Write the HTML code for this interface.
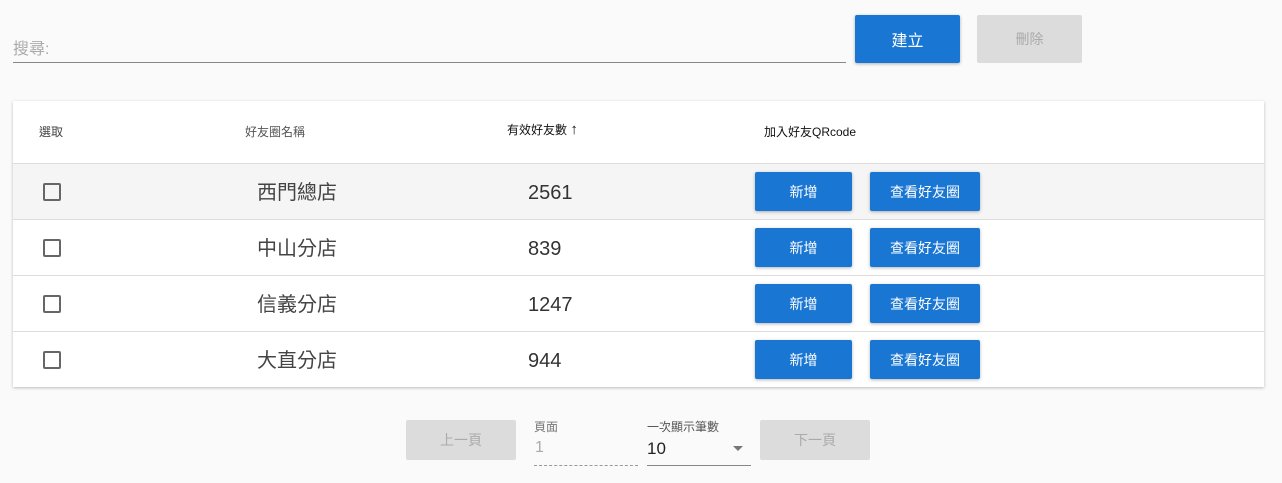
<!DOCTYPE html>
<html><head><meta charset="utf-8"><style>
*{box-sizing:border-box;margin:0;padding:0}
body{width:1282px;height:483px;background:#fafafa;font-family:"Liberation Sans","Noto Sans CJK TC",sans-serif;position:relative;overflow:hidden;color:#333}
.abs{position:absolute}
.btn{position:absolute;border-radius:2px;color:#fff;background:#1976d2;font-size:14px;display:flex;align-items:center;justify-content:center;box-shadow:0 1px 3px rgba(0,0,0,.3)}
.dis{background:#dcdcdc;color:#aaa;box-shadow:none}
.card{position:absolute;left:13px;top:101px;width:1251px;height:286px;background:#fff;box-shadow:0 1px 3px rgba(0,0,0,.25)}
.row{position:absolute;left:0;width:1251px;height:56px;border-top:1px solid #ddd}
.cb{position:absolute;left:30px;top:19px;width:18px;height:18px;border:2px solid #666;border-radius:2px}
.name{position:absolute;left:244px;top:12px;font-size:20px;color:#444}
.num{position:absolute;left:515px;top:18px;font-size:20px;color:#333}
</style></head><body>
<div class="abs" style="left:13px;top:35px;font-size:16px;color:#aaa">搜尋:</div>
<div class="abs" style="left:13px;top:62px;width:833px;height:1px;background:#888"></div>
<div class="btn" style="left:855px;top:15px;width:105px;height:48px;font-size:16px">建立</div>
<div class="btn dis" style="left:977px;top:15px;width:105px;height:48px">刪除</div>
<div class="card">
<div class="abs" style="left:26px;top:22px;font-size:12px;color:#444">選取</div>
<div class="abs" style="left:232px;top:22px;font-size:12px;color:#555">好友圈名稱</div>
<div class="abs" style="left:494px;top:20px;font-size:12px;color:#111">有效好友數 <span style="font-size:15px">↑</span></div>
<div class="abs" style="left:751px;top:22px;font-size:12px;color:#111">加入好友QRcode</div>
<div class="row" style="top:62px;background:#f5f5f5"><div class="cb"></div><div class="name">西門總店</div><div class="num">2561</div></div>
<div class="row" style="top:118px"><div class="cb"></div><div class="name">中山分店</div><div class="num">839</div></div>
<div class="row" style="top:174px"><div class="cb"></div><div class="name">信義分店</div><div class="num">1247</div></div>
<div class="row" style="top:230px"><div class="cb"></div><div class="name">大直分店</div><div class="num">944</div></div>
</div>
<div class="btn" style="left:755px;top:172px;width:97px;height:39px">新增</div><div class="btn" style="left:870px;top:172px;width:110px;height:39px">查看好友圈</div>
<div class="btn" style="left:755px;top:228px;width:97px;height:39px">新增</div><div class="btn" style="left:870px;top:228px;width:110px;height:39px">查看好友圈</div>
<div class="btn" style="left:755px;top:284px;width:97px;height:39px">新增</div><div class="btn" style="left:870px;top:284px;width:110px;height:39px">查看好友圈</div>
<div class="btn" style="left:755px;top:340px;width:97px;height:39px">新增</div><div class="btn" style="left:870px;top:340px;width:110px;height:39px">查看好友圈</div>
<div class="btn dis" style="left:406px;top:420px;width:110px;height:40px">上一頁</div>
<div class="abs" style="left:534px;top:418px;font-size:12px;color:#777">頁面</div>
<div class="abs" style="left:535px;top:439px;font-size:16px;color:#aaa">1</div>
<div class="abs" style="left:534px;top:465px;width:104px;border-top:1px dashed #999"></div>
<div class="abs" style="left:647px;top:418px;font-size:12px;color:#555">一次顯示筆數</div>
<div class="abs" style="left:647px;top:439px;font-size:17px;color:#222">10</div>
<div class="abs" style="left:733px;top:446px;width:0;height:0;border-left:5px solid transparent;border-right:5px solid transparent;border-top:5px solid #777"></div>
<div class="abs" style="left:647px;top:465px;width:104px;height:1px;background:#888"></div>
<div class="btn dis" style="left:760px;top:420px;width:110px;height:40px">下一頁</div>
</body></html>
